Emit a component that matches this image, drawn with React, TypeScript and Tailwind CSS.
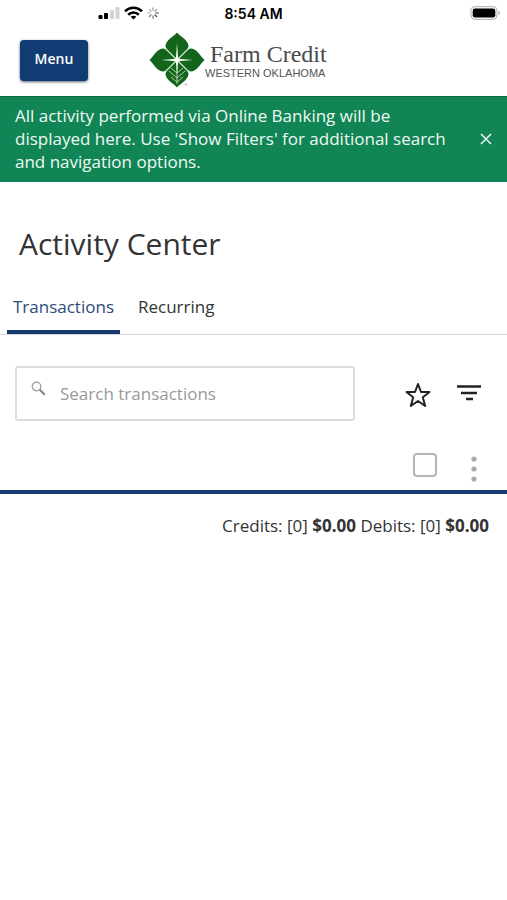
import { useState } from "react";

const tabs = ["Transactions", "Recurring"];

function StatusBar() {
  return (
    <div className="grid h-7 grid-cols-3 items-center text-black">
      <div className="flex items-center justify-end gap-1 pr-[10px] pb-[2px]">
        <svg className="h-3 w-[22px]" viewBox="0 0 22 12" aria-hidden="true">
          <rect x="0.5" y="8" width="4" height="4" rx="1" fill="#000" />
          <rect x="6" y="6" width="4" height="6" rx="1" fill="#000" />
          <rect x="12" y="3" width="4" height="9" rx="1" fill="#d4d4d4" />
          <rect x="17.5" y="0" width="4" height="12" rx="1" fill="#d4d4d4" />
        </svg>
        <svg className="h-[14px] w-[19px]" viewBox="0 0 19 14" fill="none" stroke="#000" strokeWidth="2.6" aria-hidden="true">
          <path d="M1 5.2c4.8-4.6 12.2-4.6 17 0" />
          <path d="M4.2 8.7c3-2.9 7.6-2.9 10.6 0" />
          <path d="M9.5 13.6 6.6 10.8c1.6-1.5 4.2-1.5 5.8 0z" fill="#000" stroke="none" />
        </svg>
        <svg className="h-3 w-3" viewBox="0 0 12 12" fill="none" strokeWidth="1.2" strokeLinecap="round" aria-hidden="true">
          <path d="M6 .8v2.4M9.7 2.3 8 4" stroke="#999" />
          <path d="M11.2 6H8.8M9.7 9.7 8 8" stroke="#444" />
          <path d="M6 11.2V8.8M2.3 9.7 4 8" stroke="#777" />
          <path d="M.8 6h2.4M2.3 2.3 4 4" stroke="#aaa" />
        </svg>
      </div>
      <div className="pb-[2px] text-center font-['Inter',sans-serif] text-[14px] font-semibold">8:54 AM</div>
      <div className="flex justify-end pr-[6px] pb-[2px]">
        <svg className="h-[14px] w-[31px]" viewBox="0 0 31 14" aria-hidden="true">
          <rect x="1" y="0.7" width="26" height="12.6" rx="4" fill="#fff" stroke="#bbb" strokeWidth="1.2" />
          <rect x="2.7" y="2.4" width="22.6" height="9.2" rx="2.3" fill="#000" />
          <path d="M28.5 4.8c2 .8 2 3.6 0 4.4z" fill="#aaa" />
        </svg>
      </div>
    </div>
  );
}

function Logo() {
  return (
    <div className="flex items-center">
      <svg className="h-14 w-14" viewBox="0 0 56 56" aria-hidden="true">
        <g fill="#12651a">
          <path d="M28 .5C32 5 39.500 8 39.500 14.500L38 18 28 28 18 18 16.500 14.500C16.500 8 24 5 28 .5z" />
          <path d="M55.500 28C51 32 48 39.500 41.500 39.500L38 38 28 28 38 18 41.500 16.500C48 16.500 51 24 55.500 28z" />
          <path d="M28 55.500C32 51 39.500 48 39.500 41.500L38 38 28 28 18 38 16.500 41.500C16.500 48 24 51 28 55.500z" />
          <path d="M.5 28C5 32 8 39.500 14.500 39.500L18 38 28 28 18 18 14.500 16.500C8 16.500 5 24 .5 28z" />
        </g>
        <g stroke="#d3e8cc" strokeWidth="1.2">
          <path d="M16 16l24 24M40 16l-24 24" />
          <path d="M28 35v17M28 41l-6-5M28 41l6-5M28 46l-8-7M28 46l8-7M28 50l-6-5M28 50l6-5" strokeWidth="0.8" />
        </g>
        <path d="M28 11l1.200 15.800L44 28l-14.800 1.200L28 42l-1.200-12.800L12 28l14.800-1.200z" fill="#f3fbe9" />
        <circle cx="28" cy="28" r="2.5" fill="#fff" />
        <circle cx="37" cy="52.5" r="1" fill="none" stroke="#999" strokeWidth="0.5" />
      </svg>
      <div className="whitespace-nowrap">
        <div className="pl-[5px] font-['Liberation_Serif',serif] text-[24px] leading-[26px] text-[#4a4a4a]">Farm Credit</div>
        <div className="font-['Liberation_Sans',sans-serif] text-[11px] leading-3 text-[#555]">WESTERN OKLAHOMA</div>
      </div>
    </div>
  );
}

export default function App() {
  const [activeTab, setActiveTab] = useState("Transactions");
  const [showNotice, setShowNotice] = useState(true);
  const [starred, setStarred] = useState(false);
  const [query, setQuery] = useState("");

  return (
    <main className="min-h-screen bg-white font-['Open_Sans',sans-serif] text-[17px] text-[#333]">
      <StatusBar />

      <header className="flex h-[68px] items-center gap-[61px] pl-5">
        <button className="mb-1 h-[41px] w-[68px] rounded bg-[#103b73] pb-1 text-[14px] font-semibold text-white shadow-sm shadow-gray-500">
          Menu
        </button>
        <div className="pb-1">
          <Logo />
        </div>
      </header>

      {showNotice && (
        <div className="flex items-center justify-between border-t border-[#0b6b40] bg-[#128556] pt-[7px] pr-[11px] pb-[9px] pl-[15px] text-[#eefaf3]">
          <p className="max-w-[440px] leading-[23px]">
            All activity performed via Online Banking will be displayed here. Use 'Show Filters' for additional search and navigation options.
          </p>
          <button onClick={() => setShowNotice(false)} aria-label="Dismiss" className="p-1">
            <svg className="h-3 w-3" viewBox="0 0 12 12" stroke="currentColor" strokeWidth="1.5" aria-hidden="true">
              <path d="M1 1l10 10M11 1 1 11" />
            </svg>
          </button>
        </div>
      )}

      <h1 className="px-[19px] pt-[41px] text-[30px] leading-[42px]">Activity Center</h1>

      <div role="tablist" className="mt-4 flex gap-3 border-b border-gray-300 px-[7px]">
        {tabs.map((tab) => (
          <button
            key={tab}
            role="tab"
            aria-selected={activeTab === tab}
            onClick={() => setActiveTab(tab)}
            className={`h-[53px] border-b-4 px-[6px] pt-[2px] ${activeTab === tab ? "border-[#173b70] text-[#2d4a78]" : "border-transparent"}`}
          >
            {tab}
          </button>
        ))}
      </div>

      <div className="flex items-center pt-[31px] pr-[25px] pl-[15px]">
        <label className="flex h-[55px] flex-1 rounded-[3px] border-2 border-[#dcdcdc] pl-[14px]">
          <svg className="mt-[13px] h-[15px] w-[15px] shrink-0" viewBox="0 0 15 15" fill="none" stroke="#999" aria-hidden="true">
            <circle cx="5.5" cy="5.5" r="4.3" strokeWidth="1.2" />
            <path d="M8.8 8.8l5 5" stroke="#888" strokeWidth="2.2" />
          </svg>
          <input
            type="text"
            aria-label="Search transactions"
            placeholder="Search transactions"
            value={query}
            onChange={(e) => setQuery(e.target.value)}
            className="ml-[14px] w-full min-w-0 outline-none placeholder:text-[#999]"
          />
        </label>
        <button onClick={() => setStarred(!starred)} aria-label="Favorite" aria-pressed={starred} className="ml-[50px] pt-[2px]">
          <svg className="h-[26px] w-[26px]" viewBox="0 0 26 26" fill={starred ? "#222" : "none"} stroke="#222" strokeWidth="2" strokeLinejoin="round" aria-hidden="true">
            <path d="M13 2l3 8h8.500l-6.700 5.200L20.200 24 13 19l-7.200 5 2.400-8.800L1.500 10H10z" />
          </svg>
        </button>
        <button aria-label="Show Filters" className="ml-[25px]">
          <svg className="h-[26px] w-[26px]" viewBox="0 0 26 26" stroke="#222" strokeWidth="2.6" aria-hidden="true">
            <path d="M1 5.500h24M5 12h16M10 18h7" />
          </svg>
        </button>
      </div>

      <div className="mt-[29px] flex h-[44px] items-center justify-end gap-[30px] border-b-4 border-[#173b70] pr-[26px]">
        <input
          type="checkbox"
          aria-label="Select all transactions"
          className="mb-[10px] h-6 w-6 appearance-none rounded border-2 border-[#b5b5b5] bg-white checked:bg-[#173b70]"
        />
        <button aria-label="More actions" className="mb-[2px]">
          <svg className="h-[26px] w-[14px]" viewBox="0 0 14 26" fill="#aaa" aria-hidden="true">
            <circle cx="7" cy="3" r="2.6" />
            <circle cx="7" cy="13" r="2.6" />
            <circle cx="7" cy="23" r="2.6" />
          </svg>
        </button>
      </div>

      <p className="pt-[19px] pr-[18px] text-right">
        Credits: [0] <strong>$0.00</strong> Debits: [0] <strong>$0.00</strong>
      </p>
    </main>
  );
}
